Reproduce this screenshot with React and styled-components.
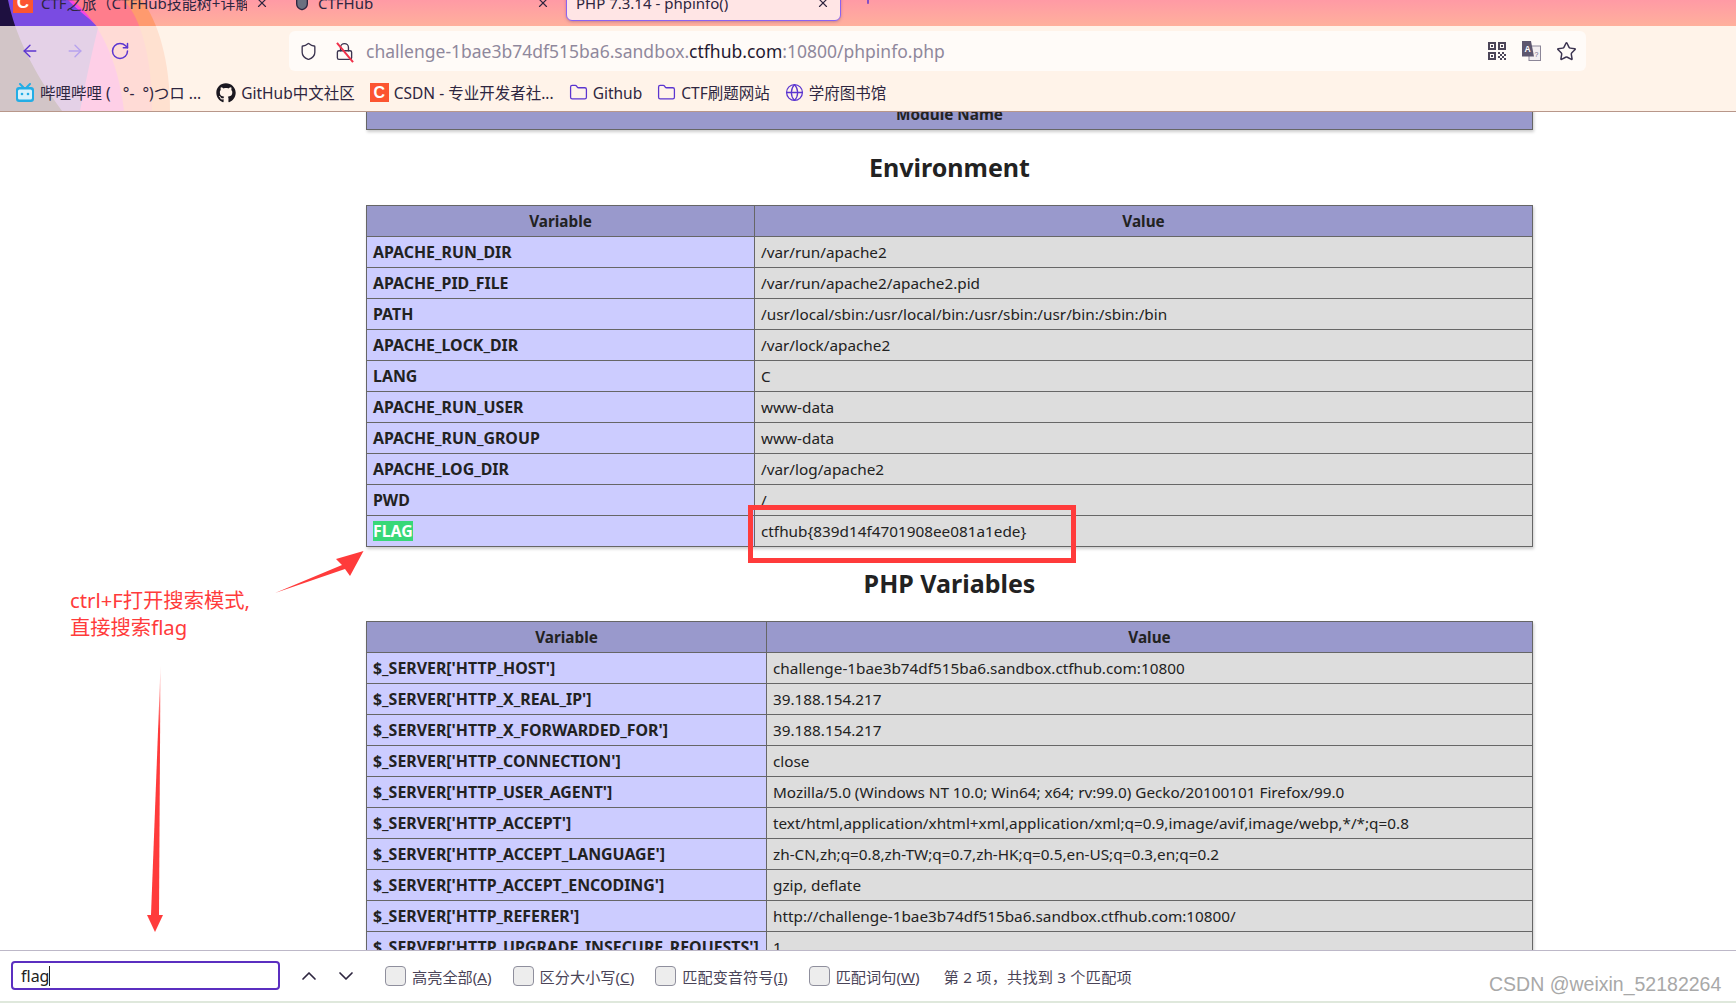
import React from "react";
import styled, { createGlobalStyle } from "styled-components";
import {
  ArrowLeft,
  ArrowRight,
  RotateCw,
  Shield,
  Star,
  Folder,
  Globe,
  ChevronUp,
  ChevronDown,
  X,
  Plus,
  Lock,
} from "lucide-react";
import { FaGithub } from "react-icons/fa";

const FONT = `"Noto Sans", "Noto Sans CJK SC", sans-serif`;

const envRows = [
  ["APACHE_RUN_DIR", "/var/run/apache2"],
  ["APACHE_PID_FILE", "/var/run/apache2/apache2.pid"],
  ["PATH", "/usr/local/sbin:/usr/local/bin:/usr/sbin:/usr/bin:/sbin:/bin"],
  ["APACHE_LOCK_DIR", "/var/lock/apache2"],
  ["LANG", "C"],
  ["APACHE_RUN_USER", "www-data"],
  ["APACHE_RUN_GROUP", "www-data"],
  ["APACHE_LOG_DIR", "/var/log/apache2"],
  ["PWD", "/"],
  ["FLAG", "ctfhub{839d14f4701908ee081a1ede}"],
];

const phpRows = [
  ["$_SERVER['HTTP_HOST']", "challenge-1bae3b74df515ba6.sandbox.ctfhub.com:10800"],
  ["$_SERVER['HTTP_X_REAL_IP']", "39.188.154.217"],
  ["$_SERVER['HTTP_X_FORWARDED_FOR']", "39.188.154.217"],
  ["$_SERVER['HTTP_CONNECTION']", "close"],
  ["$_SERVER['HTTP_USER_AGENT']", "Mozilla/5.0 (Windows NT 10.0; Win64; x64; rv:99.0) Gecko/20100101 Firefox/99.0"],
  ["$_SERVER['HTTP_ACCEPT']", "text/html,application/xhtml+xml,application/xml;q=0.9,image/avif,image/webp,*/*;q=0.8"],
  ["$_SERVER['HTTP_ACCEPT_LANGUAGE']", "zh-CN,zh;q=0.8,zh-TW;q=0.7,zh-HK;q=0.5,en-US;q=0.3,en;q=0.2"],
  ["$_SERVER['HTTP_ACCEPT_ENCODING']", "gzip, deflate"],
  ["$_SERVER['HTTP_REFERER']", "http://challenge-1bae3b74df515ba6.sandbox.ctfhub.com:10800/"],
  ["$_SERVER['HTTP_UPGRADE_INSECURE_REQUESTS']", "1"],
];

const findOptions = [
  ["高亮全部(", "A"],
  ["区分大小写(", "C"],
  ["匹配变音符号(", "I"],
  ["匹配词句(", "W"],
];

const BiliIcon = () => (
  <svg width="20" height="20" viewBox="0 0 20 20">
    <path d="M5 1l3 3M15 1l-3 3" stroke="#23ade5" strokeWidth="2" strokeLinecap="round" />
    <rect x="1" y="4" width="18" height="15" rx="3" fill="#23ade5" />
    <rect x="3" y="6.5" width="14" height="10" rx="1.5" fill="#d8f1fb" />
    <circle cx="7" cy="11" r="1.3" fill="#23ade5" />
    <circle cx="13" cy="11" r="1.3" fill="#23ade5" />
  </svg>
);

const QrIcon = () => (
  <svg width="18" height="18" viewBox="0 0 18 18" fill="#4c4558">
    <path d="M0 0h8v8H0zM2 2v4h4V2zM10 0h8v8h-8zM12 2v4h4V2z" fillRule="evenodd" />
    <path d="M0 10h8v8H0zM2 12v4h4v-4z" fillRule="evenodd" />
    <path d="M3 3h2v2H3zM13 3h2v2h-2zM3 13h2v2H3zM10 10h2v2h-2zM14 10h2v2h-2zM12 12h2v2h-2zM16 12h2v2h-2zM10 14h2v2h-2zM14 14h2v2h-2zM12 16h2v2h-2zM16 16h2v2h-2z" />
  </svg>
);

const TranslateIcon = () => (
  <svg width="20" height="20" viewBox="0 0 20 20">
    <rect x="8" y="5" width="11.5" height="14.5" fill="#f3eef0" stroke="#8c8698" strokeWidth="1" />
    <path d="M1 0h9l3 15.5H1z" fill="#5d566e" />
    <text x="3.4" y="11" fontSize="8.5" fontWeight="700" fontFamily="Liberation Sans, sans-serif" fill="#fff">A</text>
    <text x="13.5" y="16" fontSize="7" fontFamily="Liberation Sans, sans-serif" fill="#6d6680">?</text>
  </svg>
);

const ThinArrow = () => (
  <ArrowSvg width="100" height="50" viewBox="0 0 100 50" $left={275} $top={548}>
    <polygon points="0,45 67,17 61,11 88.5,3 75,28 70,21" fill="#ff3b3b" />
  </ArrowSvg>
);

const LongArrow = () => (
  <ArrowSvg width="20" height="270" viewBox="0 0 20 270" $left={145} $top={664}>
    <defs>
      <linearGradient id="tail" x1="0" y1="0" x2="0" y2="1">
        <stop offset="0" stopColor="#ff3b3b" stopOpacity="0.2" />
        <stop offset="0.25" stopColor="#ff3b3b" />
      </linearGradient>
    </defs>
    <polygon points="15.5,2 6,251 14,251" fill="url(#tail)" />
    <polygon points="2,251 18,251 10,268" fill="#ff3b3b" />
  </ArrowSvg>
);

const DataTable = ({ head, rows, labelWidth }) => (
  <Table>
    <colgroup>
      <col style={{ width: labelWidth }} />
      <col />
    </colgroup>
    <tbody>
      <tr>
        <HeadCell>{head[0]}</HeadCell>
        <HeadCell>{head[1]}</HeadCell>
      </tr>
      {rows.map(([name, value]) => (
        <tr key={name}>
          <LabelCell>{name === "FLAG" ? <Match>FLAG</Match> : name}</LabelCell>
          <ValueCell>{value}</ValueCell>
        </tr>
      ))}
    </tbody>
  </Table>
);

export default function App() {
  return (
    <>
      <GlobalStyle />
      <Page>
        <Chrome>
          <Wallpaper width="180" height="111" viewBox="0 0 180 111">
            <path d="M0 0H142C158 22 170 60 170 111H0Z" fill="#ff9a6e" />
            <path d="M0 0H124C142 20 152 60 152 111H0Z" fill="#ff7d8c" />
            <path d="M0 0H72C100 22 118 60 124 111H0Z" fill="#f744e2" />
            <path d="M0 0H68C82 14 92 20 98 28C90 60 84 90 80 111H0Z" fill="#7a4be2" />
            <path d="M0 0H8C15 34 32 70 62 111H0Z" fill="#1e1040" />
          </Wallpaper>

          <TabStrip>
            <Tab $width={281}>
              <CsdnLogo $size={20}>C</CsdnLogo>
              <TabTitle>CTF之旅（CTFHub技能树+详解）</TabTitle>
              <X size={14} />
            </Tab>
            <Tab $width={281}>
              <Shield size={16} fill="#6b7080" />
              <TabTitle>CTFHub</TabTitle>
              <X size={14} />
            </Tab>
            <Tab $width={275} $active>
              <TabTitle>PHP 7.3.14 - phpinfo()</TabTitle>
              <X size={14} />
            </Tab>
            <NewTab>
              <Plus size={18} />
            </NewTab>
          </TabStrip>

          <Toolbar>
            <NavButton><ArrowLeft size={20} strokeWidth={1.6} /></NavButton>
            <NavButton $muted><ArrowRight size={20} strokeWidth={1.6} /></NavButton>
            <NavButton><RotateCw size={20} strokeWidth={1.8} /></NavButton>
            <AddressBar>
              <Shield size={19} strokeWidth={1.7} color="#3c3450" />
              <LockWrap>
                <Lock size={19} strokeWidth={1.7} color="#3c3450" />
                <LockSlash />
              </LockWrap>
              <Url>
                challenge-1bae3b74df515ba6.sandbox.<b>ctfhub.com</b>:10800/phpinfo.php
              </Url>
              <AddressIcons>
                <QrIcon />
                <TranslateIcon />
                <Star size={21} strokeWidth={1.7} color="#3c3450" />
              </AddressIcons>
            </AddressBar>
          </Toolbar>

          <Bookmarks>
            <Bookmark><BiliIcon />哔哩哔哩 (   °-  °)つロ ...</Bookmark>
            <Bookmark><FaGithub size={20} color="#1b1820" />GitHub中文社区</Bookmark>
            <Bookmark><CsdnLogo $size={19}>C</CsdnLogo>CSDN - 专业开发者社...</Bookmark>
            <Bookmark><Folder size={19} strokeWidth={1.6} color="#5b35d0" />Github</Bookmark>
            <Bookmark><Folder size={19} strokeWidth={1.6} color="#5b35d0" />CTF刷题网站</Bookmark>
            <Bookmark><Globe size={19} strokeWidth={1.6} color="#5b35d0" />学府图书馆</Bookmark>
          </Bookmarks>
        </Chrome>

        <Viewport>
          <Content>
            <ModuleTable>
              <tbody>
                <tr>
                  <HeadCell>Module Name</HeadCell>
                </tr>
              </tbody>
            </ModuleTable>
            <Heading $top={22}>Environment</Heading>
            <DataTable head={["Variable", "Value"]} rows={envRows} labelWidth={388} />
            <Heading $top={21}>PHP Variables</Heading>
            <DataTable head={["Variable", "Value"]} rows={phpRows} labelWidth={400} />
          </Content>
          <RedBox />
          <ThinArrow />
          <LongArrow />
          <Note>
            ctrl+F打开搜索模式,
            <br />
            直接搜索flag
          </Note>
        </Viewport>

        <FindBar>
          <FindInput>
            flag
            <Caret />
          </FindInput>
          <FindNav>
            <ChevronUp size={24} strokeWidth={1.7} />
            <ChevronDown size={24} strokeWidth={1.7} />
          </FindNav>
          {findOptions.map(([label, key]) => (
            <FindOption key={key}>
              <Checkbox />
              <span>
                {label}
                <u>{key}</u>)
              </span>
            </FindOption>
          ))}
          <FindStatus>第 2 项，共找到 3 个匹配项</FindStatus>
          <Watermark>CSDN @weixin_52182264</Watermark>
        </FindBar>
      </Page>
    </>
  );
}

const GlobalStyle = createGlobalStyle`
  html, body {
    margin: 0;
    overflow: hidden;
    background: #fff;
  }
  * {
    box-sizing: border-box;
  }
`;

const Page = styled.div`
  position: relative;
  display: flex;
  flex-direction: column;
  width: 1736px;
  height: 1003px;
  font-family: ${FONT};
  color: #222;
  overflow: hidden;
`;

const Chrome = styled.header`
  position: relative;
  flex: none;
  height: 112px;
  border-bottom: 1px solid #b8978a;
  background: linear-gradient(#ff9aa5 0, #ffb09c 26px, #fff3e8 26px);
  color: #2e2640;
`;

const Wallpaper = styled.svg`
  position: absolute;
  left: 0;
  top: 0;
`;

const TabStrip = styled.div`
  position: relative;
  display: flex;
  align-items: flex-start;
  height: 26px;
  padding-left: 4px;
  overflow: hidden;
`;

const Tab = styled.div`
  display: flex;
  flex: none;
  align-items: center;
  gap: 8px;
  width: ${(p) => p.$width}px;
  height: 37px;
  margin-top: -16px;
  padding: 0 ${(p) => (p.$active ? 10 : 16)}px 0 9px;
  font-size: 15px;
  border-radius: 0 0 6px 6px;
  ${(p) =>
    p.$active &&
    `
    background: #ffe5e5;
    border: 1px solid #8a62f2;
    box-shadow: 0 1px 3px rgba(90, 50, 120, 0.35);
  `}
`;

const TabTitle = styled.span`
  flex: 1;
  white-space: nowrap;
  overflow: hidden;
`;

const NewTab = styled.div`
  display: flex;
  margin: -11px 0 0 18px;
  color: #5b35d0;
`;

const CsdnLogo = styled.span`
  display: flex;
  flex: none;
  align-items: center;
  justify-content: center;
  width: ${(p) => p.$size}px;
  height: ${(p) => p.$size}px;
  background: #fc5531;
  color: #fff;
  font: 700 ${(p) => p.$size - 3}px "Liberation Sans", sans-serif;
`;

const Toolbar = styled.div`
  position: relative;
  display: flex;
  align-items: center;
  height: 50px;
  padding-left: 20px;
  background: rgba(255, 243, 232, 0.8);
`;

const NavButton = styled.span`
  display: flex;
  width: 20px;
  margin-right: 25px;
  color: ${(p) => (p.$muted ? "#b6a2ee" : "#5b35d0")};
`;

const AddressBar = styled.div`
  display: flex;
  align-items: center;
  width: 1297px;
  height: 40px;
  margin-left: 134px;
  padding: 0 9px 0 10px;
  background: #fffbf8;
  border-radius: 6px;
`;

const LockWrap = styled.span`
  position: relative;
  display: flex;
  margin: 0 12px 0 17px;
`;

const LockSlash = styled.i`
  position: absolute;
  left: 9px;
  top: -2px;
  width: 2px;
  height: 25px;
  background: #f0304a;
  transform: rotate(-40deg);
`;

const Url = styled.div`
  font-size: 17.5px;
  color: #8f889c;
  white-space: nowrap;

  b {
    font-weight: 400;
    color: #1f1830;
  }
`;

const AddressIcons = styled.div`
  display: flex;
  align-items: center;
  gap: 15px;
  margin-left: auto;
`;

const Bookmarks = styled.nav`
  position: relative;
  display: flex;
  align-items: center;
  gap: 15px;
  height: 35px;
  padding: 0 0 2px 15px;
  background: rgba(255, 243, 232, 0.8);
`;

const Bookmark = styled.span`
  display: flex;
  align-items: center;
  gap: 5px;
  font-size: 15.5px;
  white-space: pre;
`;

const Viewport = styled.main`
  position: relative;
  flex: 1;
  min-height: 0;
  overflow: hidden;
`;

const Content = styled.div`
  width: 1167px;
  margin: -14px 0 0 366px;
`;

const Table = styled.table`
  width: 100%;
  table-layout: fixed;
  border-collapse: collapse;
  box-shadow: 1px 2px 3px #ccc;
  font-size: 15.3px;
  line-height: 20px;
`;

const ModuleTable = styled(Table)``;

const Cell = styled.td`
  height: 31px;
  padding: 0 6px;
  border: 1px solid #666;
  white-space: nowrap;
  overflow: hidden;
`;

const HeadCell = styled(Cell)`
  background: #9999cc;
  font-weight: 700;
  text-align: center;
`;

const LabelCell = styled(Cell)`
  background: #ccccff;
  font-size: 15.9px;
  font-weight: 700;
`;

const ValueCell = styled(Cell)`
  background: #ddd;
`;

const Match = styled.span`
  display: inline-block;
  background: #38d878;
  color: #fff;
`;

const Heading = styled.h2`
  margin: ${(p) => p.$top}px 0 23px;
  font-size: 25px;
  line-height: 30px;
  font-weight: 700;
  text-align: center;
`;

const RedBox = styled.div`
  position: absolute;
  left: 748px;
  top: 393px;
  width: 328px;
  height: 58px;
  border: 5px solid #ff3b3b;
`;

const ArrowSvg = styled.svg`
  position: absolute;
  left: ${(p) => p.$left}px;
  top: ${(p) => p.$top - 112}px;
`;

const Note = styled.div`
  position: absolute;
  left: 70px;
  top: 475px;
  color: #ff3b3b;
  font-size: 20.3px;
  line-height: 27px;
`;

const FindBar = styled.footer`
  position: relative;
  display: flex;
  flex: none;
  align-items: center;
  height: 53px;
  padding: 0 0 1px 11px;
  background: #fff;
  border-top: 1px solid #bdb8c8;
  border-bottom: 2px solid #dfe8dc;
  color: #4a4458;
  font-size: 15.2px;
`;

const FindInput = styled.div`
  display: flex;
  align-items: center;
  width: 269px;
  height: 29px;
  padding-left: 8px;
  border: 2px solid #5b2fc0;
  border-radius: 4px;
  color: #222;
  font-size: 16px;
`;

const Caret = styled.i`
  width: 1px;
  height: 20px;
  background: #222;
`;

const FindNav = styled.div`
  display: flex;
  gap: 13px;
  margin: 0 27px 0 17px;
  color: #2e2640;
`;

const FindOption = styled.label`
  display: flex;
  align-items: center;
  gap: 6px;
  margin-right: 21px;
  white-space: nowrap;
`;

const Checkbox = styled.span`
  width: 21px;
  height: 20px;
  background: #ededed;
  border: 1px solid #8f8f9d;
  border-radius: 4px;
`;

const FindStatus = styled.span`
  margin-left: 3px;
  letter-spacing: 0.2px;
`;

const Watermark = styled.span`
  position: absolute;
  left: 1489px;
  top: 22px;
  font: 19.5px "Liberation Sans", sans-serif;
  color: #a8a8a8;
  white-space: nowrap;
`;
